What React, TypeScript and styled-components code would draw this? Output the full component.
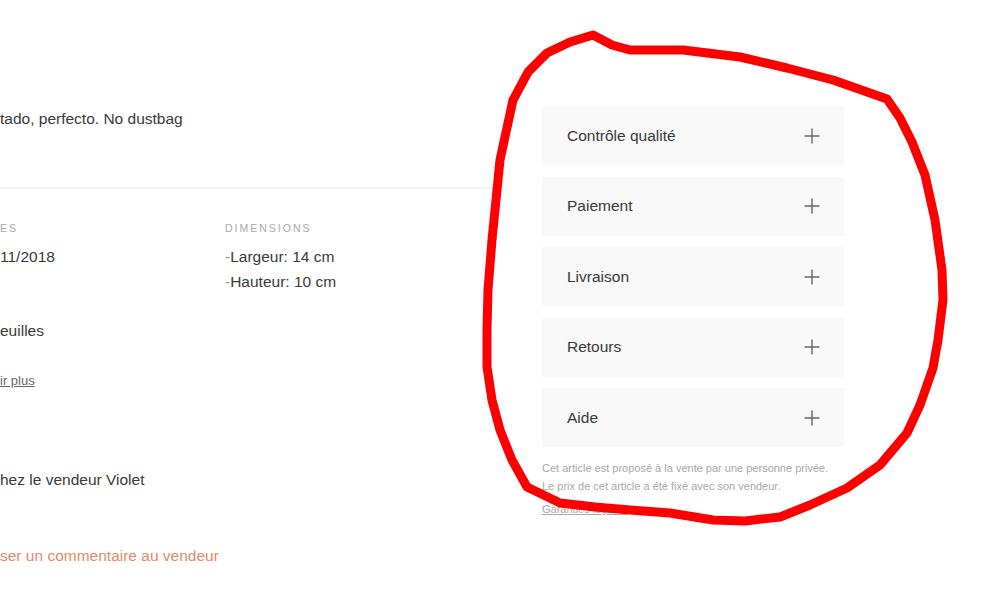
import styled, { createGlobalStyle } from "styled-components";

const GlobalStyle = createGlobalStyle`
  body {
    margin: 0;
    background: #ffffff;
    font-family: "Liberation Sans", Arial, sans-serif;
    color: #3a3a3a;
  }
`;

const Page = styled.div`
  position: relative;
  width: 1000px;
  height: 594px;
  overflow: hidden;
  display: flex;
  gap: 42px;
`;

const Details = styled.div`
  width: 500px;
  display: flex;
  flex-direction: column;
  padding-top: 109px;
`;

const Text = styled.div<{ $top?: number }>`
  margin-top: ${(p) => p.$top ?? 0}px;
  font-size: 15.5px;
  line-height: 20px;
  color: #3a3a3a;
  white-space: nowrap;
`;

const Divider = styled.div`
  margin-top: 58px;
  height: 2px;
  background: #f1f1f1;
`;

const Specs = styled.div`
  margin-top: 32px;
  display: grid;
  grid-template-columns: 225px 1fr;
`;

const Label = styled.div`
  font-size: 10.5px;
  line-height: 14px;
  letter-spacing: 2px;
  color: #a9a9a9;
  text-transform: uppercase;
  margin-bottom: 8.5px;
`;

const Value = styled.div`
  font-size: 15.5px;
  line-height: 25px;
  color: #3a3a3a;
  white-space: nowrap;
`;

const Dash = styled.span`
  color: #999999;
`;

const MoreLink = styled.a`
  margin-top: 31px;
  font-size: 13px;
  line-height: 18px;
  color: #666666;
  text-decoration: underline;
`;

const CommentLink = styled.a`
  margin-top: 56px;
  font-size: 15.5px;
  line-height: 20px;
  color: #e18b6c;
  white-space: nowrap;
`;

const Sidebar = styled.div`
  width: 302px;
  padding-top: 106px;
  display: flex;
  flex-direction: column;
`;

const Accordion = styled.div`
  display: flex;
  flex-direction: column;
  gap: 11.5px;
`;

const Row = styled.div`
  height: 59px;
  background: #f8f8f8;
  display: flex;
  align-items: center;
  justify-content: space-between;
  padding: 0 24px 0 25px;
  box-sizing: border-box;
  font-size: 15.5px;
  color: #3a3a3a;
`;

const Note = styled.p`
  margin: 12px 0 0;
  font-size: 11px;
  line-height: 18px;
  color: #a8a8a8;
`;

const Legal = styled.a`
  margin-top: 5px;
  font-size: 11px;
  line-height: 18px;
  color: #a8a8a8;
  text-decoration: underline;
`;

const Scribble = styled.svg`
  position: absolute;
  left: 0;
  top: 0;
  pointer-events: none;
`;

const Plus = () => (
  <svg width="16" height="16" viewBox="0 0 16 16">
    <path d="M8 0.5V15.5M0.5 8H15.5" stroke="#666" strokeWidth="1.4" />
  </svg>
);

const sections = ["Contrôle qualité", "Paiement", "Livraison", "Retours", "Aide"];

const ring =
  "M593 35 L612 45 L630 50 L683 50 L740 57 L787 68 L833 80 L887 99 L900 118 L912 142 L925 175 L935 220 L942 270 L943 300 L938 340 L933 368 L920 405 L907 433 L880 465 L847 488 L810 505 L780 517 L745 521 L713 520 L670 513 L630 510 L595 507 L560 503 L527 487 L512 460 L500 430 L492 400 L487 367 L487 330 L488 290 L492 240 L500 160 L513 100 L528 72 L547 53 L570 42 Z";

export default function App() {
  return (
    <>
      <GlobalStyle />
      <Page>
        <Details>
          <Text>tado, perfecto. No dustbag</Text>
          <Divider />
          <Specs>
            <div>
              <Label>es</Label>
              <Value>11/2018</Value>
            </div>
            <div>
              <Label>Dimensions</Label>
              <Value>
                <Dash>-</Dash>Largeur: 14 cm
              </Value>
              <Value>
                <Dash>-</Dash>Hauteur: 10 cm
              </Value>
            </div>
          </Specs>
          <Text $top={27.5}>euilles</Text>
          <MoreLink>ir plus</MoreLink>
          <Text $top={80}>hez le vendeur Violet</Text>
          <CommentLink>ser un commentaire au vendeur</CommentLink>
        </Details>
        <Sidebar>
          <Accordion>
            {sections.map((s) => (
              <Row key={s}>
                <span>{s}</span>
                <Plus />
              </Row>
            ))}
          </Accordion>
          <Note>
            Cet article est proposé à la vente par une personne privée.
            <br />
            Le prix de cet article a été fixé avec son vendeur.
          </Note>
          <Legal>Garanties légales</Legal>
        </Sidebar>
        <Scribble width="1000" height="594" viewBox="0 0 1000 594">
          <path
            d={ring}
            fill="none"
            stroke="#ff0000"
            strokeWidth="9"
            strokeLinejoin="round"
            strokeLinecap="round"
          />
        </Scribble>
      </Page>
    </>
  );
}
